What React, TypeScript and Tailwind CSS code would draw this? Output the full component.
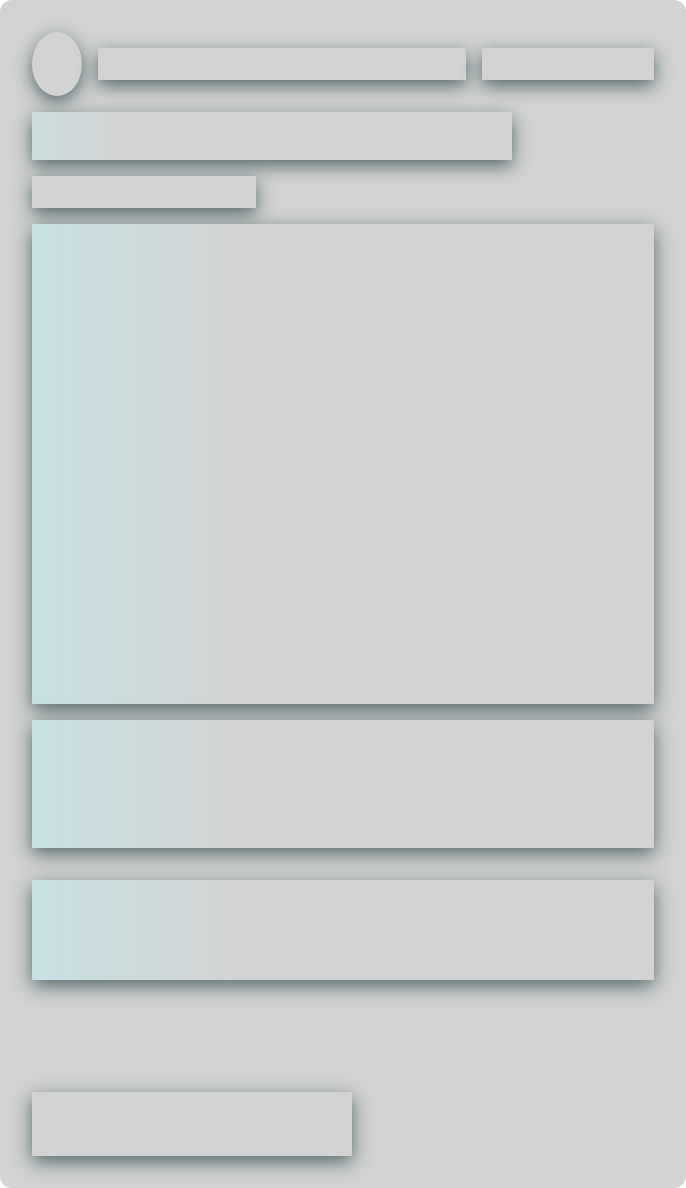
export default function App() {
  const sh = "shadow-[0_6px_18px_rgba(30,60,60,0.7)]";
  return (
    <div className="w-[686px] h-[1188px] bg-white">
      <div className="w-[686px] h-[1188px] bg-[#d3d3d3] rounded-[12px] p-8 flex flex-col">
        <div className="flex items-center gap-4">
          <div className={`w-[50px] h-[64px] rounded-[50%] bg-[#d3d3d3] ${sh}`} />
          <div className={`w-[368px] h-8 bg-[#d3d3d3] ${sh}`} />
          <div className={`w-[172px] h-8 bg-[#d3d3d3] ${sh}`} />
        </div>
        <div className={`mt-4 w-[480px] h-12 bg-[linear-gradient(90deg,#cadcdd_0%,#d3d3d3_20%)] ${sh}`} />
        <div className={`mt-4 w-[224px] h-8 bg-[#d3d3d3] ${sh}`} />
        <div className={`mt-4 w-[622px] h-[480px] bg-[linear-gradient(90deg,#c6e1e3_0%,#d3d3d3_33%)] ${sh}`} />
        <div className={`mt-4 w-[622px] h-[128px] bg-[linear-gradient(90deg,#c6e1e3_0%,#d3d3d3_33%)] ${sh}`} />
        <div className={`mt-8 w-[622px] h-[100px] bg-[linear-gradient(90deg,#c6e1e3_0%,#d3d3d3_33%)] ${sh}`} />
        <div className={`mt-auto w-[320px] h-16 bg-[#d3d3d3] ${sh}`} />
      </div>
    </div>
  );
}
